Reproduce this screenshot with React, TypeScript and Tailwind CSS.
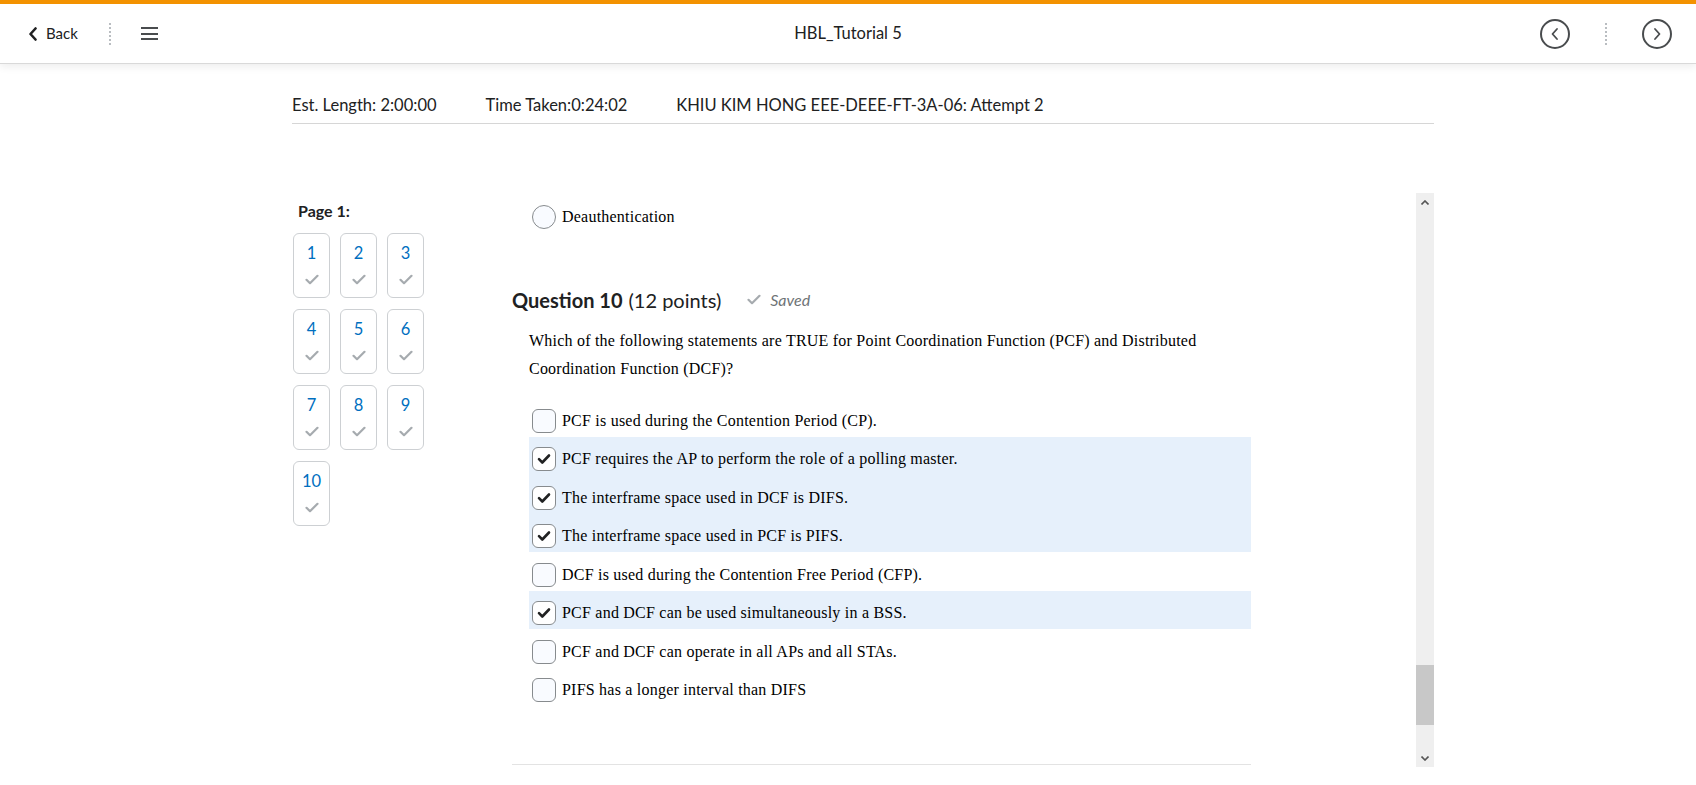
import React from "react";

const NavCheck = () => (
  <svg width="14" height="11" viewBox="0 0 14 11" className="text-[#a6abaf]">
    <path d="M1.5 5.8 L5 9.2 L12.5 1.8" fill="none" stroke="currentColor" strokeWidth="2.2" strokeLinecap="round" strokeLinejoin="round" />
  </svg>
);

const BoxCheck = () => (
  <svg width="14" height="12" viewBox="0 0 14 12">
    <path d="M2 6.2 L5.3 9.5 L12 2.5" fill="none" stroke="#202122" strokeWidth="2.6" strokeLinecap="round" strokeLinejoin="round" />
  </svg>
);

const options: { text: string; checked: boolean }[] = [
  { text: "PCF is used during the Contention Period (CP).", checked: false },
  { text: "PCF requires the AP to perform the role of a polling master.", checked: true },
  { text: "The interframe space used in DCF is DIFS.", checked: true },
  { text: "The interframe space used in PCF is PIFS.", checked: true },
  { text: "DCF is used during the Contention Free Period (CFP).", checked: false },
  { text: "PCF and DCF can be used simultaneously in a BSS.", checked: true },
  { text: "PCF and DCF can operate in all APs and all STAs.", checked: false },
  { text: "PIFS has a longer interval than DIFS", checked: false },
];

const CircleBtn = ({ dir }: { dir: "l" | "r" }) => (
  <div className="w-[30px] h-[30px] rounded-full border-[2px] border-[#494c4e] flex items-center justify-center">
    <svg width="10" height="14" viewBox="0 0 10 14">
      {dir === "l" ? (
        <path d="M7 2 L2.5 7 L7 12" fill="none" stroke="#494c4e" strokeWidth="1.8" strokeLinecap="round" strokeLinejoin="round" />
      ) : (
        <path d="M3 2 L7.5 7 L3 12" fill="none" stroke="#494c4e" strokeWidth="1.8" strokeLinecap="round" strokeLinejoin="round" />
      )}
    </svg>
  </div>
);

const Dots = () => <div className="h-[22px] border-l-[2px] border-dotted border-[#b9bdc1]" />;

export default function App() {
  return (
    <div className="w-[1696px] h-[785px] overflow-hidden bg-white relative font-['Lato','Noto_Sans',sans-serif] text-[#202122]">
      {/* Header */}
      <div className="relative z-10 bg-white border-t-[4px] border-[#f39200] border-b border-b-[#d9d9d9] h-[64px] shadow-[0_3px_8px_rgba(0,0,0,0.07)] grid grid-cols-[1fr_auto_1fr] items-center">
        <div className="flex items-center pl-[28px]">
          <svg width="10" height="14" viewBox="0 0 10 14">
            <path d="M7.5 1.5 L2.5 7 L7.5 12.5" fill="none" stroke="#202122" strokeWidth="2.6" strokeLinecap="round" strokeLinejoin="round" />
          </svg>
          <span className="ml-[8px] text-[15px] text-[#202122]">Back</span>
          <div className="ml-[31px]"><Dots /></div>
          <div className="ml-[30px] flex flex-col gap-[3.5px]">
            <div className="w-[17px] h-[2px] bg-[#494c4e]" />
            <div className="w-[17px] h-[2px] bg-[#494c4e]" />
            <div className="w-[17px] h-[2px] bg-[#494c4e]" />
          </div>
        </div>
        <div className="text-[16.5px] text-[#202122]">HBL_Tutorial 5</div>
        <div className="flex items-center justify-end pr-[24px]">
          <CircleBtn dir="l" />
          <div className="mx-[35px]"><Dots /></div>
          <CircleBtn dir="r" />
        </div>
      </div>

      {/* Info row */}
      <div className="ml-[292px] w-[1142px] pt-[29px] pb-[6px] border-b border-[#d6d6d6] flex gap-[49px] text-[16.5px] leading-[24px] text-[#202122]">
        <span>Est. Length: 2:00:00</span>
        <span>Time Taken:0:24:02</span>
        <span>KHIU KIM HONG EEE-DEEE-FT-3A-06: Attempt 2</span>
      </div>

      {/* Main */}
      <div className="ml-[292px] w-[1142px] mt-[69px] flex">
        {/* Left nav */}
        <div className="w-[220px] shrink-0 pl-[1px] pt-[8px]">
          <div className="pl-[5px] text-[16px] leading-[20px] font-bold text-[#202122]">Page 1:</div>
          <div className="mt-[12px] grid grid-cols-[repeat(3,37px)] gap-x-[10px] gap-y-[11px]">
            {[1, 2, 3, 4, 5, 6, 7, 8, 9, 10].map((n) => (
              <div key={n} className="h-[65px] rounded-[6px] border border-[#cdd0d3] flex flex-col items-center pt-[9px]">
                <span className="text-[16.5px] leading-[20px] text-[#006fbf]">{n}</span>
                <div className="mt-[11px]"><NavCheck /></div>
              </div>
            ))}
          </div>
        </div>

        {/* Scroll region */}
        <div className="flex-1 h-[574px] flex">
          <div className="flex-1 overflow-hidden">
            <div className="w-[739px] font-['Liberation_Serif','Times_New_Roman',serif] text-[16px] tracking-[0.22px] text-black">
              <div className="pl-[20px] pt-[12px] h-[38.5px] flex items-start">
                <div className="w-[24px] h-[24px] rounded-full border border-[#878b8e] bg-[#f9fbff] shrink-0" />
                <span className="ml-[6px] leading-[24px]">Deauthentication</span>
              </div>

              <div className="mt-[54px] flex items-center font-['Lato','Noto_Sans',sans-serif] tracking-normal leading-[28px]">
                <span className="text-[20px] font-bold text-[#202122]">Question 10</span>
                <span className="ml-[6px] text-[20px] text-[#202122]">(12 points)</span>
                <div className="ml-[26px]"><NavCheck /></div>
                <span className="ml-[9px] text-[16px] italic text-[#6e7376]">Saved</span>
              </div>

              <div className="pl-[17px] mt-[13px] leading-[28px]">
                Which of the following statements are TRUE for Point Coordination Function (PCF) and Distributed Coordination Function (DCF)?
              </div>

              <div className="pl-[17px] mt-[15.5px]">
                {options.map((o, i) => (
                  <div key={i} className={`h-[38.5px] pl-[3px] pt-[10.5px] flex items-start ${o.checked ? "bg-[#e6f0fb]" : ""}`}>
                    <div className={`w-[24px] h-[24px] rounded-[6px] border border-[#878b8e] shrink-0 flex items-center justify-center ${o.checked ? "bg-white" : "bg-[#f9fbff]"}`}>
                      {o.checked && <BoxCheck />}
                    </div>
                    <span className="ml-[6px] leading-[24px]">{o.text}</span>
                  </div>
                ))}
              </div>

              <div className="mt-[58px] border-t border-[#e3e3e3]" />
            </div>
          </div>

          {/* Scrollbar */}
          <div className="w-[18px] shrink-0 bg-[#efefef] flex flex-col">
            <div className="h-[18px] flex items-center justify-center">
              <svg width="8" height="5" viewBox="0 0 8 5"><path d="M0.5 4.5 L4 1 L7.5 4.5" fill="none" stroke="#555" strokeWidth="1.6" /></svg>
            </div>
            <div className="flex-1" />
            <div className="h-[60px] bg-[#c8c8c8]" />
            <div className="h-[24px]" />
            <div className="h-[18px] flex items-center justify-center">
              <svg width="8" height="5" viewBox="0 0 8 5"><path d="M0.5 0.5 L4 4 L7.5 0.5" fill="none" stroke="#555" strokeWidth="1.6" /></svg>
            </div>
          </div>
        </div>
      </div>
    </div>
  );
}
